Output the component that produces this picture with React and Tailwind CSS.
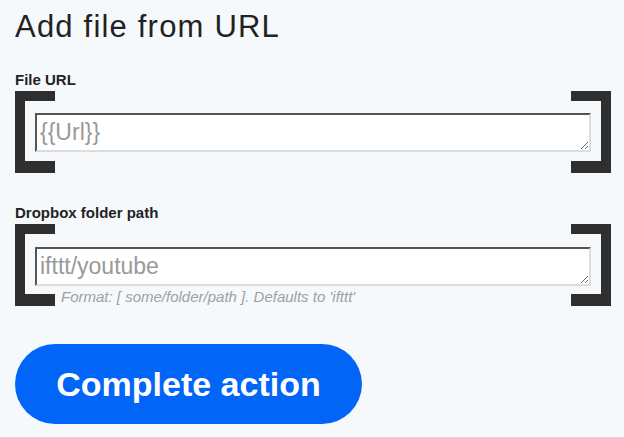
export default function App() {
  const font = { fontFamily: '"Liberation Sans", Arial, sans-serif' };
  const Bracket = ({ side }) => (
    <div
      className={
        "h-[82px] w-[40px] shrink-0 border-t-[10px] border-b-[12px] border-[#2f2f2f] " +
        (side === "left" ? "border-l-[10px]" : "border-r-[10px]")
      }
    />
  );
  return (
    <div className="min-h-[437px] w-full bg-[#f6f9fc] pl-[15px] pr-[13px] pt-[11px] text-[#222]" style={font}>
      <h1 className="text-[31px] leading-[31px] tracking-[1.2px] font-normal text-[#222]">Add file from URL</h1>

      <div className="mt-[30px]">
        <div className="text-[15px] leading-[15px] font-bold">File URL</div>
        <div className="mt-[4px] flex items-start">
          <Bracket side="left" />
          <div className="mx-[-20px] flex-1 pt-[22px]">
            <textarea
              placeholder="{{Url}}"
              className="block h-[39px] w-full resize-y border-2 border-t-[#555] border-l-[#555] border-r-[#ddd] border-b-[#ddd] bg-white px-[3px] py-[4px] text-[23px] leading-[26px] text-[#333] placeholder:text-[#999] outline-none"
              style={font}
            />
          </div>
          <Bracket side="right" />
        </div>
      </div>

      <div className="mt-[32px]">
        <div className="text-[15px] leading-[15px] font-bold">Dropbox folder path</div>
        <div className="mt-[4px] flex items-start">
          <Bracket side="left" />
          <div className="mx-[-20px] flex-1 pt-[23px]">
            <textarea
              placeholder="ifttt/youtube"
              className="block h-[39px] w-full resize-y border-2 border-t-[#555] border-l-[#555] border-r-[#ddd] border-b-[#ddd] bg-white px-[3px] py-[4px] text-[23px] leading-[26px] text-[#333] placeholder:text-[#999] outline-none"
              style={font}
            />
            <div className="mt-[2px] pl-[26px] text-[15px] leading-[18px] italic text-[#a0a0a0]">
              Format: [ some/folder/path ]. Defaults to 'ifttt'
            </div>
          </div>
          <Bracket side="right" />
        </div>
      </div>

      <button
        className="mt-[38px] flex h-[80px] w-[347px] items-center justify-center rounded-full bg-[#0165f8] text-[34px] font-bold text-white"
        style={font}
      >
        Complete action
      </button>
    </div>
  );
}
